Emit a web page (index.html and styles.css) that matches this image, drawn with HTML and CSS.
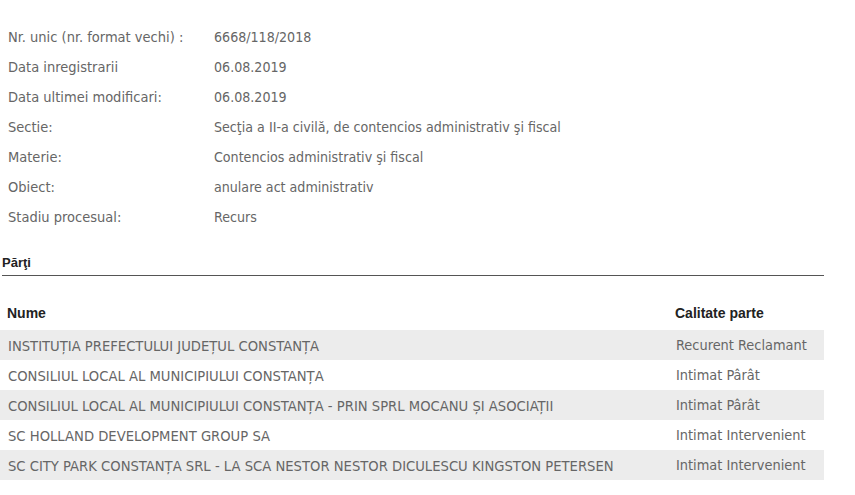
FILE: index.html
```html
<!DOCTYPE html>
<html lang="ro">
<head>
<meta charset="UTF-8">
<title>Detalii dosar</title>
<link rel="stylesheet" href="styles.css">
</head>
<body>
<div id="page">
  <!-- Detalii dosar -->
  <div class="details">
    <div class="row"><span class="label">Nr. unic (nr. format vechi) :</span><span class="value">6668/118/2018</span></div>
    <div class="row"><span class="label">Data inregistrarii</span><span class="value">06.08.2019</span></div>
    <div class="row"><span class="label">Data ultimei modificari:</span><span class="value">06.08.2019</span></div>
    <div class="row"><span class="label">Sectie:</span><span class="value">Secţia a II-a civilă, de contencios administrativ şi fiscal</span></div>
    <div class="row"><span class="label">Materie:</span><span class="value">Contencios administrativ şi fiscal</span></div>
    <div class="row"><span class="label">Obiect:</span><span class="value">anulare act administrativ</span></div>
    <div class="row"><span class="label">Stadiu procesual:</span><span class="value">Recurs</span></div>
  </div>

  <h3 class="section">Părţi</h3>

  <table class="parti">
    <thead>
      <tr><th class="nume">Nume</th><th>Calitate parte</th></tr>
    </thead>
    <tbody>
      <tr><td>INSTITUȚIA PREFECTULUI JUDEȚUL CONSTANȚA</td><td>Recurent Reclamant</td></tr>
      <tr><td>CONSILIUL LOCAL AL MUNICIPIULUI CONSTANȚA</td><td>Intimat Pârât</td></tr>
      <tr><td>CONSILIUL LOCAL AL MUNICIPIULUI CONSTANȚA - PRIN SPRL MOCANU ȘI ASOCIAȚII</td><td>Intimat Pârât</td></tr>
      <tr><td>SC HOLLAND DEVELOPMENT GROUP SA</td><td>Intimat Intervenient</td></tr>
      <tr><td>SC CITY PARK CONSTANȚA SRL - LA SCA NESTOR NESTOR DICULESCU KINGSTON PETERSEN</td><td>Intimat Intervenient</td></tr>
    </tbody>
  </table>
</div>
</body>
</html>
```

FILE: styles.css
```css
body {
  margin: 0;
  background: #fff;
  font-family: "DejaVu Sans Condensed", "DejaVu Sans", sans-serif;
  font-size: 14px;
  color: #666;
}

#page {
  width: 824px;
  padding-top: 22px;
}

/* Detalii dosar */
.details {
  padding-left: 8px;
}
.row {
  display: flex;
  height: 30px;
  align-items: center;
}
.label {
  width: 206px;
  font-size: 14.5px;
}
.value {
  font-size: 14.1px;
}

/* Parti */
.section {
  margin: 23px 0 0 2px;
  padding-bottom: 5px;
  border-bottom: 1px solid #555;
  font-family: "Liberation Sans", Arial, sans-serif;
  font-size: 13px;
  font-weight: bold;
  color: #222;
}

.parti {
  width: 100%;
  margin-top: 29px;
  border-collapse: collapse;
  table-layout: fixed;
}
.parti th {
  box-sizing: border-box;
  text-align: left;
  padding: 0 5px 9px;
  font-family: "Liberation Sans", Arial, sans-serif;
  font-size: 14px;
  font-weight: bold;
  color: #222;
}
.parti th.nume {
  width: 670px;
  padding-left: 7px;
}
.parti td {
  height: 30px;
  padding: 0 6px 0 8px;
  font-size: 14.65px;
  white-space: nowrap;
}
.parti td + td {
  padding-left: 6px;
  font-size: 14.4px;
}
.parti tbody tr:nth-child(odd) {
  background: #ececec;
}
```
